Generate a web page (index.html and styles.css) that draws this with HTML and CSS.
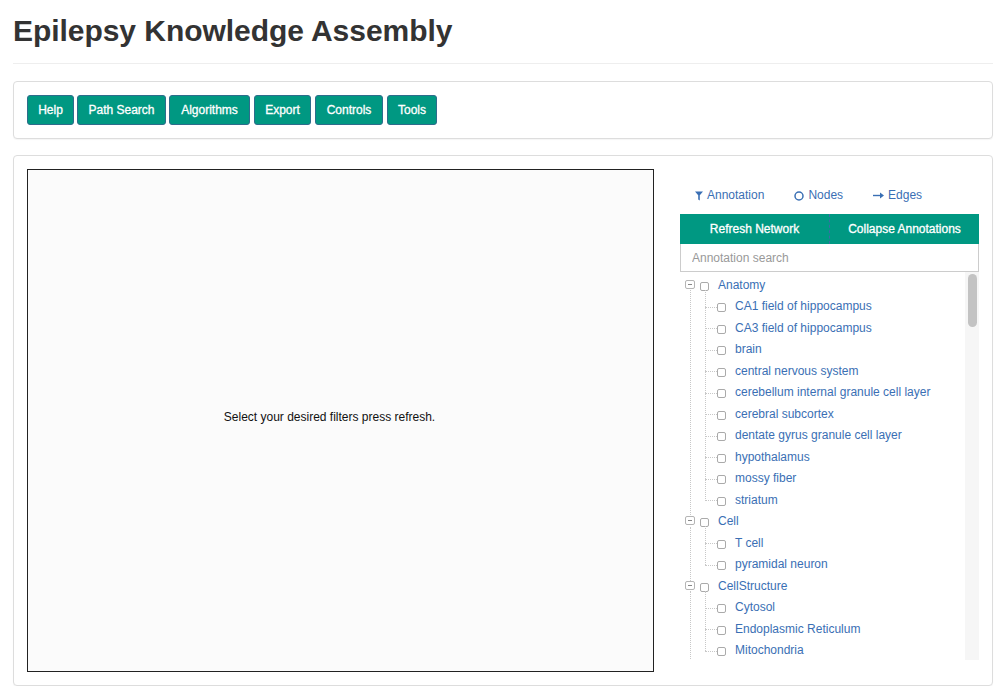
FILE: index.html
```html
<!DOCTYPE html>
<html>
<head>
<meta charset="utf-8">
<title>Epilepsy Knowledge Assembly</title>
<link rel="stylesheet" href="styles.css">
</head>
<body>
<div class="page">
  <h1 class="title">Epilepsy Knowledge Assembly</h1>
  <hr class="rule">
  <div class="panel toolbar">
    <button class="btn btn-help">Help</button>
    <button class="btn btn-path">Path Search</button>
    <button class="btn btn-algo">Algorithms</button>
    <button class="btn btn-export">Export</button>
    <button class="btn btn-controls">Controls</button>
    <button class="btn btn-tools">Tools</button>
  </div>
  <div class="panel main">
    <div class="canvas">
      <p class="canvas-msg">Select your desired filters press refresh.</p>
    </div>
    <div class="side">
      <div class="tabs">
        <a class="tab tab-ann">
          <svg class="ico" width="8" height="10" viewBox="0 0 8 10"><path d="M0 0.5H8L4.8 4.2V9.5L3.2 8.5V4.2Z" fill="#3a6fb4"/></svg>Annotation</a>
        <a class="tab tab-nodes">
          <svg class="ico" width="10" height="10" viewBox="0 0 10 10"><circle cx="5" cy="5" r="4" fill="none" stroke="#3a6fb4" stroke-width="1.5"/></svg>Nodes</a>
        <a class="tab tab-edges">
          <svg class="ico" width="11" height="7" viewBox="0 0 11 7"><path d="M0 3.5H8" stroke="#3a6fb4" stroke-width="1.4"/><path d="M7 0.5L11 3.5L7 6.5Z" fill="#3a6fb4"/></svg>Edges</a>
      </div>
      <div class="action-bar">
        <button class="bar-btn">Refresh Network</button>
        <span class="bar-divider"></span>
        <button class="bar-btn">Collapse Annotations</button>
      </div>
      <input class="search" type="text" placeholder="Annotation search">
      <div class="tree-wrap">
        <ul class="tree">
          <li class="node">
            <div class="row"><span class="exp"></span><span class="cb"></span><span class="label">Anatomy</span></div>
            <ul class="kids">
              <li class="kid"><span class="cb"></span><span class="label">CA1 field of hippocampus</span></li>
              <li class="kid"><span class="cb"></span><span class="label">CA3 field of hippocampus</span></li>
              <li class="kid"><span class="cb"></span><span class="label">brain</span></li>
              <li class="kid"><span class="cb"></span><span class="label">central nervous system</span></li>
              <li class="kid"><span class="cb"></span><span class="label">cerebellum internal granule cell layer</span></li>
              <li class="kid"><span class="cb"></span><span class="label">cerebral subcortex</span></li>
              <li class="kid"><span class="cb"></span><span class="label">dentate gyrus granule cell layer</span></li>
              <li class="kid"><span class="cb"></span><span class="label">hypothalamus</span></li>
              <li class="kid"><span class="cb"></span><span class="label">mossy fiber</span></li>
              <li class="kid"><span class="cb"></span><span class="label">striatum</span></li>
            </ul>
          </li>
          <li class="node">
            <div class="row"><span class="exp"></span><span class="cb"></span><span class="label">Cell</span></div>
            <ul class="kids">
              <li class="kid"><span class="cb"></span><span class="label">T cell</span></li>
              <li class="kid"><span class="cb"></span><span class="label">pyramidal neuron</span></li>
            </ul>
          </li>
          <li class="node">
            <div class="row"><span class="exp"></span><span class="cb"></span><span class="label">CellStructure</span></div>
            <ul class="kids">
              <li class="kid"><span class="cb"></span><span class="label">Cytosol</span></li>
              <li class="kid"><span class="cb"></span><span class="label">Endoplasmic Reticulum</span></li>
              <li class="kid"><span class="cb"></span><span class="label">Mitochondria</span></li>
            </ul>
          </li>
        </ul>
        <div class="scrollbar"><div class="thumb"></div></div>
      </div>
    </div>
  </div>
</div>
</body>
</html>
```

FILE: styles.css
```css
* { box-sizing: border-box; }

html, body {
  margin: 0;
  padding: 0;
  background: #fff;
  font-family: "Liberation Sans", Arial, Helvetica, sans-serif;
  font-size: 12px;
  color: #333;
}

.page {
  width: 980px;
  margin-left: 13px;
  padding-top: 14px;
}

.title {
  margin: 0;
  font-size: 30px;
  line-height: 33px;
  font-weight: bold;
  color: #333;
  letter-spacing: -0.05px;
}

.rule {
  margin: 16px 0 0 0;
  border: 0;
  border-top: 1px solid #eee;
  height: 0;
}

.panel {
  border: 1px solid #ddd;
  border-radius: 4px;
  background: #fff;
  box-shadow: 0 1px 1px rgba(0,0,0,0.04);
}

.toolbar {
  margin-top: 17px;
  padding: 13px;
  display: flex;
  gap: 3px;
}

.btn {
  height: 30px;
  padding: 0;
  font-family: inherit;
  font-size: 12px;
  color: #fff;
  background: #009882;
  border: 1px solid #2e6c8c;
  border-radius: 3px;
  -webkit-text-stroke: 0.3px #fff;
  cursor: pointer;
}
.btn-help { width: 47px; }
.btn-path { width: 89px; }
.btn-algo { width: 81px; }
.btn-export { width: 57px; margin-left: 1px; }
.btn-controls { width: 68px; margin-left: 1px; }
.btn-tools { width: 50px; margin-left: 1px; }

.main {
  margin-top: 16px;
  padding: 13px;
  display: flex;
  gap: 26px;
  height: 531px;
}

.canvas {
  width: 627px;
  height: 503px;
  border: 1px solid #222;
  background: #fbfbfb;
  display: flex;
  align-items: center;
  justify-content: center;
  padding: 0 22px 8px 0;
}

.canvas-msg {
  margin: 0;
  font-size: 12px;
  color: #111;
}

.side {
  flex: 1;
  display: flex;
  flex-direction: column;
}

.tabs {
  height: 45px;
  padding: 8px 0 0 15px;
  display: flex;
  line-height: 17px;
}

.tab {
  display: flex;
  align-items: center;
  color: #3a6fb4;
  font-size: 12px;
  text-decoration: none;
}
.tab-ann { margin-right: 30px; }
.tab-nodes { margin-right: 30px; }
.tab-ann .ico { margin-right: 4px; }
.tab-nodes .ico { margin-right: 4px; }
.tab-edges .ico { margin-right: 4px; }

.action-bar {
  display: flex;
  height: 30px;
  background: #009882;
}

.bar-btn {
  flex: 1;
  height: 30px;
  border: 0;
  background: #009882;
  color: #fff;
  font-family: inherit;
  font-size: 12px;
  -webkit-text-stroke: 0.3px #fff;
  padding: 0;
}
.bar-divider {
  width: 0;
  border-left: 1px dashed #3d6aa8;
}

.search {
  height: 28px;
  border: 1px solid #ccc;
  border-top: 0;
  padding: 0 11px;
  font-family: inherit;
  font-size: 12px;
  color: #555;
  outline: none;
}
.search::placeholder { color: #999; }

.tree-wrap {
  height: 388px;
  display: flex;
  overflow: hidden;
}

.tree {
  flex: 1;
  margin: 0;
  padding: 2px 0 0 0;
  list-style: none;
}

.node {
  position: relative;
}
.node::before {
  content: "";
  position: absolute;
  left: 10px;
  top: 16px;
  bottom: -6px;
  border-left: 1px dotted #c8c8c8;
}

.row, .kid {
  height: 21.5px;
  display: flex;
  align-items: center;
  white-space: nowrap;
}

.exp {
  width: 10px;
  height: 9px;
  margin-left: 5px;
  border: 1px solid #b5b5b5;
  border-radius: 2px;
  background: #fff;
  position: relative;
  margin-top: -1px;
  z-index: 1;
}
.exp::after {
  content: "";
  position: absolute;
  left: 2px;
  right: 2px;
  top: 3px;
  border-top: 1px solid #888;
}

.cb {
  width: 9px;
  height: 9px;
  border: 1px solid #aaa;
  border-radius: 2px;
  background: #fff;
  margin-top: 3px;
}

.row .cb { margin-left: 5px; }
.row .label { margin-left: 9px; }

.label {
  color: #3a6fb4;
  font-size: 12px;
}

.kids {
  margin: 0;
  padding: 0;
  list-style: none;
  position: relative;
}
.kids::before {
  content: "";
  position: absolute;
  left: 25px;
  top: -6px;
  height: calc(100% - 4px);
  border-left: 1px dotted #c8c8c8;
}

.kid {
  position: relative;
}
.kid::before {
  content: "";
  position: absolute;
  left: 25px;
  width: 12px;
  top: 11px;
  border-top: 1px dotted #c8c8c8;
}
.kid .cb { margin-left: 37px; }
.kid .label { margin-left: 9px; }

.scrollbar {
  width: 14px;
  background: #f6f6f6;
  padding: 2px 2px 0 3px;
}
.thumb {
  height: 53px;
  background: #c3c3c3;
  border-radius: 5px;
}
```
